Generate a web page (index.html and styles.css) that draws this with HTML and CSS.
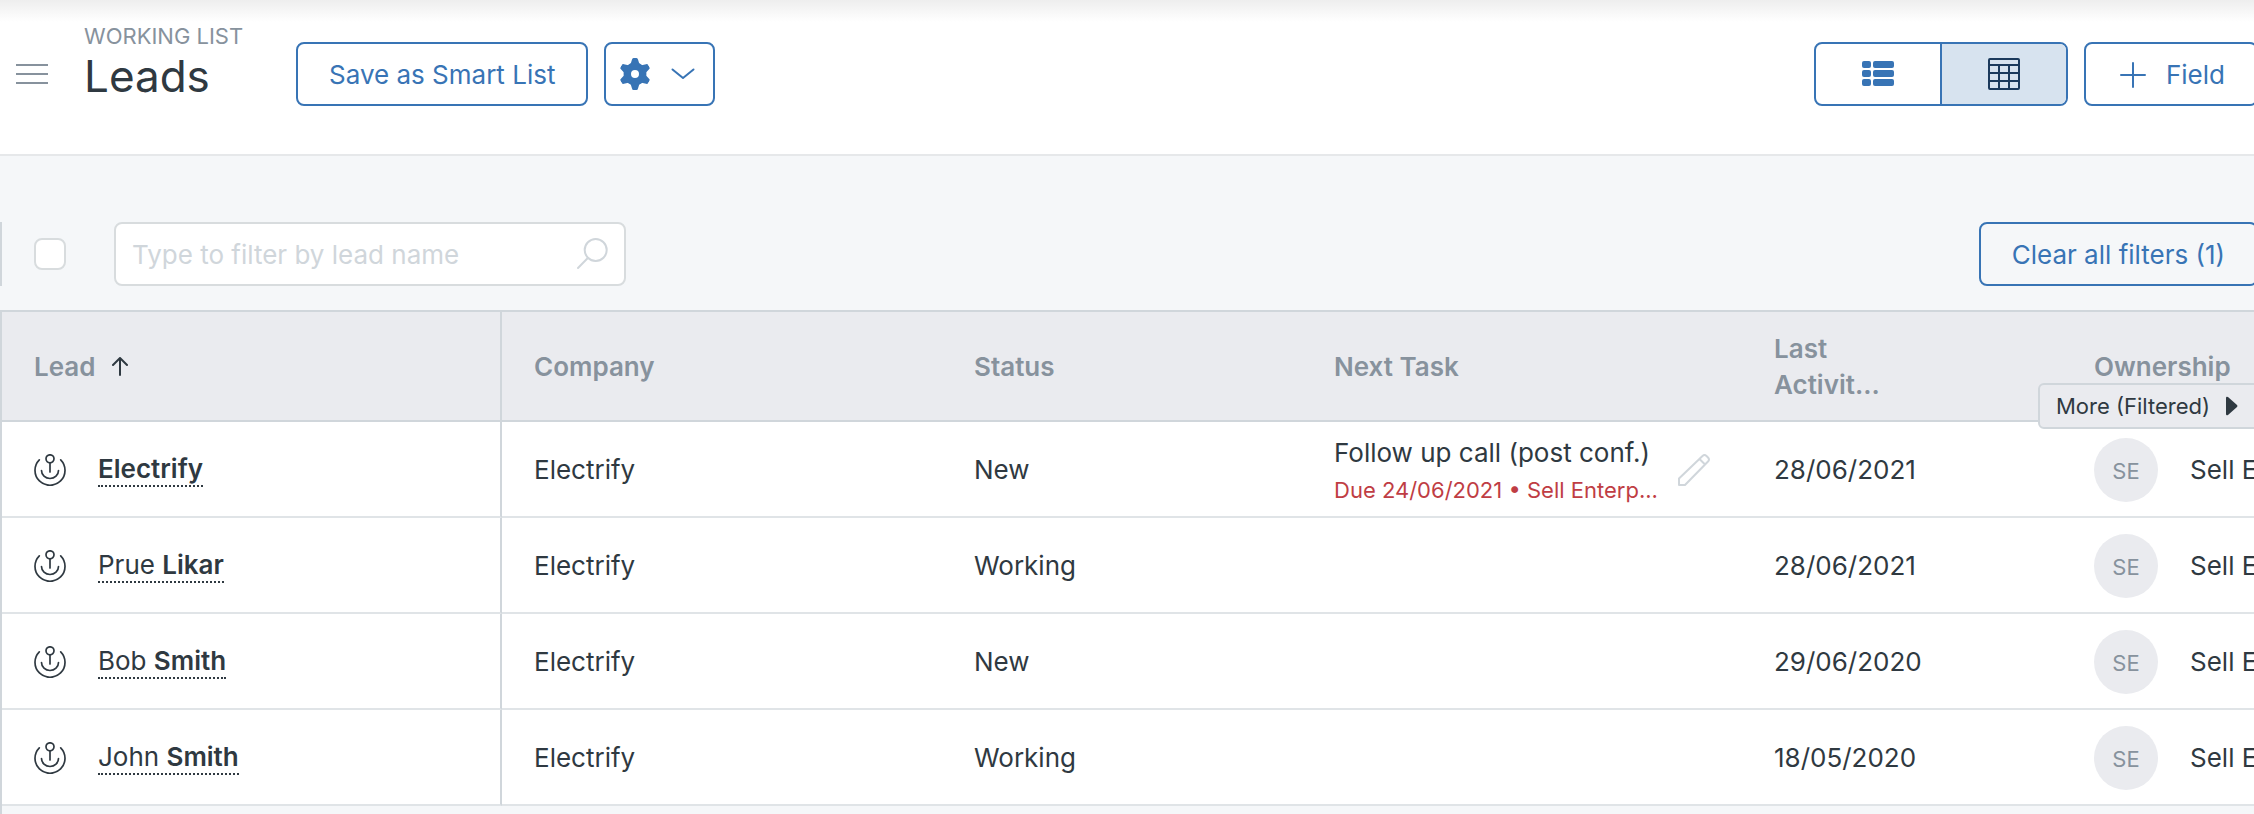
FILE: index.html
```
<!DOCTYPE html>
<html lang="en">
  <head>
    <meta charset="UTF-8">
    <meta name="viewport" content="width=device-width, initial-scale=1.0">
    <title>Leads</title>
    <link rel="stylesheet" href="styles.css">
  </head>
  <body>
    <svg class="sprite" aria-hidden="true">
      <symbol id="anchor" viewBox="0 0 32 32">
        <g fill="none" stroke="currentColor" stroke-width="1.7" stroke-linecap="round">
          <circle cx="16" cy="4.800" r="4"/>
          <path d="M16 9v9M7.500 16.500a8.500 8 0 0 0 17 0M5.300 5.800a15 15 0 1 0 21.400 0"/>
        </g>
      </symbol>
      <symbol id="tooth" viewBox="0 0 32 32">
        <path d="M11 8l2-6.500Q13.300 0 14.500 0h3Q18.700 0 19 1.500L21 8z"/>
      </symbol>
    </svg>

    <header class="header">
      <button class="menu" aria-label="Menu"><span></span><span></span><span></span></button>
      <div class="title">
        <p class="subtitle">WORKING LIST</p>
        <h1>Leads</h1>
      </div>
      <button class="btn">Save as Smart List</button>
      <button class="btn settings" aria-label="Settings">
        <svg width="32" height="32" viewBox="0 0 32 32" fill="currentColor">
          <circle cx="16" cy="16" r="7.700" fill="none" stroke="currentColor" stroke-width="7.400"/>
          <use href="#tooth" width="32" height="32"/>
          <use href="#tooth" width="32" height="32" transform="rotate(60 16 16)"/>
          <use href="#tooth" width="32" height="32" transform="rotate(120 16 16)"/>
          <use href="#tooth" width="32" height="32" transform="rotate(180 16 16)"/>
          <use href="#tooth" width="32" height="32" transform="rotate(240 16 16)"/>
          <use href="#tooth" width="32" height="32" transform="rotate(300 16 16)"/>
        </svg>
        <svg width="24" height="12" viewBox="0 0 24 12">
          <path d="M1.500 1.500 12 10 22.500 1.500" fill="none" stroke="currentColor" stroke-width="2" stroke-linecap="round" stroke-linejoin="round"/>
        </svg>
      </button>
      <div class="views">
        <button class="view" aria-label="List view">
          <svg width="32" height="26" viewBox="0 0 32 26" fill="currentColor">
            <rect width="9" height="7" rx="2"/><rect x="11" width="21" height="7" rx="2"/>
            <rect y="9" width="9" height="7" rx="2"/><rect x="11" y="9" width="21" height="7" rx="2"/>
            <rect y="18" width="9" height="7" rx="2"/><rect x="11" y="18" width="21" height="7" rx="2"/>
          </svg>
        </button>
        <button class="view view-active" aria-label="Table view">
          <svg width="32" height="32" viewBox="0 0 32 32" fill="none" stroke="currentColor" stroke-width="2">
            <rect x="1" y="1" width="30" height="30" rx="1"/>
            <path d="M1 7h30M1 15h30M1 23h30M11 7v24M21 7v24"/>
          </svg>
        </button>
      </div>
      <button class="btn field">
        <svg width="26" height="26" viewBox="0 0 26 26">
          <path d="M13 1v24M1 13h24" stroke="currentColor" stroke-width="2" stroke-linecap="round"/>
        </svg>
        Field
      </button>
    </header>

    <div class="filters">
      <input type="checkbox" class="select-all" aria-label="Select all leads">
      <label class="search">
        <input type="text" placeholder="Type to filter by lead name" aria-label="Filter by lead name">
        <svg width="32" height="32" viewBox="0 0 32 32" fill="none" stroke="currentColor" stroke-width="2" stroke-linecap="round">
          <circle cx="19.700" cy="12" r="11"/>
          <path d="M11.800 20 2 30"/>
        </svg>
      </label>
      <button class="btn clear">Clear all filters (1)</button>
    </div>

    <div class="grid">
      <table>
        <colgroup>
          <col class="col-lead">
          <col class="col-company">
          <col class="col-status">
          <col class="col-task">
          <col class="col-activity">
          <col>
        </colgroup>
        <thead>
          <tr>
            <th>
              <span class="sort">Lead
                <svg width="18" height="20" viewBox="0 0 18 20">
                  <path d="M9 18V1M2 8l7-7 7 7" fill="none" stroke="currentColor" stroke-width="2" stroke-linecap="round" stroke-linejoin="round"/>
                </svg>
              </span>
            </th>
            <th>Company</th>
            <th>Status</th>
            <th>Next Task</th>
            <th>Last<br>Activit...</th>
            <th>
              Ownership
              <button class="more">More (Filtered)
                <svg width="12" height="20" viewBox="0 0 12 20"><path d="M0 2Q0 0 2 1l9 8q1 1 0 2l-9 8q-2 1-2-1z" fill="currentColor"/></svg>
              </button>
            </th>
          </tr>
        </thead>
        <tbody>
          <tr>
            <td><div class="lead"><svg class="anchor"><use href="#anchor"/></svg><a href="#"><b>Electrify</b></a></div></td>
            <td>Electrify</td>
            <td>New</td>
            <td>
              <div class="task">
                <div class="task-text">
                  <p>Follow up call (post conf.)</p>
                  <p class="due">Due 24/06/2021 • Sell Enterp...</p>
                </div>
                <button class="edit" aria-label="Edit task">
                  <svg width="32" height="32" viewBox="0 0 32 32" fill="none" stroke="currentColor" stroke-width="2" stroke-linejoin="round">
                    <path d="M1 31v-6.500L24.500 2q2-2 4 0l1.500 1.500q2 2 0 4L7 31zM21.500 5l5.800 5.800"/>
                  </svg>
                </button>
              </div>
            </td>
            <td>28/06/2021</td>
            <td><div class="owner"><span class="avatar">SE</span>Sell Enterprise</div></td>
          </tr>
          <tr>
            <td><div class="lead"><svg class="anchor"><use href="#anchor"/></svg><a href="#">Prue <b>Likar</b></a></div></td>
            <td>Electrify</td>
            <td>Working</td>
            <td></td>
            <td>28/06/2021</td>
            <td><div class="owner"><span class="avatar">SE</span>Sell Enterprise</div></td>
          </tr>
          <tr>
            <td><div class="lead"><svg class="anchor"><use href="#anchor"/></svg><a href="#">Bob <b>Smith</b></a></div></td>
            <td>Electrify</td>
            <td>New</td>
            <td></td>
            <td>29/06/2020</td>
            <td><div class="owner"><span class="avatar">SE</span>Sell Enterprise</div></td>
          </tr>
          <tr>
            <td><div class="lead"><svg class="anchor"><use href="#anchor"/></svg><a href="#">John <b>Smith</b></a></div></td>
            <td>Electrify</td>
            <td>Working</td>
            <td></td>
            <td>18/05/2020</td>
            <td><div class="owner"><span class="avatar">SE</span>Sell Enterprise</div></td>
          </tr>
        </tbody>
      </table>
    </div>
  </body>
</html>
```
FILE: styles.css
```
* { box-sizing: border-box; }
html { height: 100%; }
body {
  min-height: 100%;
  margin: 0;
  display: flex;
  flex-direction: column;
  overflow: hidden;
  background-color: #f5f7f9;
  color: #2f3941;
  font: 26px/36px Inter, "Liberation Sans", sans-serif;
}
p, h1 { margin: 0; }
svg { display: block; flex: none; }
button, input { font: inherit; }
button { cursor: pointer; }
.sprite {
  position: absolute;
  width: 0;
  height: 0;
}

/* header */
.header {
  display: flex;
  align-items: flex-start;
  margin-right: -4px;
  height: 156px;
  padding: 42px 0 0 16px;
  border-bottom: 2px solid #e6e8ea;
  background: linear-gradient(#eeeeee, #fff 22px);
}
.menu {
  display: flex;
  flex-direction: column;
  gap: 7px;
  width: 32px;
  margin-top: 22px;
  padding: 0;
  border: 0;
  background: none;
}
.menu span {
  height: 2px;
  background-color: #87929d;
}
.title {
  width: 212px;
  margin-top: -20px;
  margin-left: 36px;
}
.subtitle {
  color: #87929d;
  font-size: 22px;
  line-height: 28px;
}
h1 {
  font-size: 44px;
  font-weight: 400;
  line-height: 52px;
}
.btn {
  display: flex;
  align-items: center;
  flex: none;
  height: 64px;
  padding: 2px 31px 0;
  border: 2px solid #3874b5;
  border-radius: 8px;
  background: none;
  color: #3874b5;
  white-space: nowrap;
}
.settings {
  gap: 20px;
  margin-left: 16px;
  padding: 0 18px 0 13px;
}
.views {
  display: flex;
  margin-left: auto;
  border: 2px solid #3874b5;
  border-radius: 8px;
  overflow: hidden;
}
.view {
  display: flex;
  align-items: center;
  justify-content: center;
  width: 124px;
  height: 60px;
  padding: 0;
  border: 0;
  background: none;
  color: #3874b5;
}
.view-active {
  width: 126px;
  border-left: 2px solid #3874b5;
  background-color: #d7e3ef;
  color: #1b3a5c;
}
.field {
  gap: 20px;
  margin-left: 16px;
  padding-left: 34px;
}

/* filters */
.filters {
  display: flex;
  align-items: center;
  height: 64px;
  margin: 66px -4px 24px 0;
  border-left: 2px solid #d0d6db;
}
.select-all {
  appearance: none;
  width: 32px;
  height: 32px;
  margin: 0 48px 0 32px;
  border: 2px solid #d8dcde;
  border-radius: 8px;
  background-color: #fff;
}
.search {
  display: flex;
  align-items: center;
  width: 512px;
  height: 64px;
  padding: 0 16px;
  border: 2px solid #d8dcde;
  border-radius: 8px;
  background-color: #fff;
  color: #d0d6db;
}
.search input {
  flex: 1;
  min-width: 0;
  padding: 2px 0 0;
  border: 0;
  outline: 0;
  background: none;
  color: #2f3941;
}
.search input::placeholder { color: #d0d6db; }
.clear { margin-left: auto; }

/* table */
.grid {
  flex: 1;
  border-top: 2px solid #d0d6db;
  border-left: 2px solid #d0d6db;
}
table {
  width: 100%;
  table-layout: fixed;
  border-spacing: 0;
}
.col-lead { width: 500px; }
.col-company, .col-task { width: 440px; }
.col-status { width: 360px; }
.col-activity { width: 320px; }
th, td {
  padding: 2px 32px 0;
  text-align: left;
  white-space: nowrap;
}
th {
  position: relative;
  height: 110px;
  border-bottom: 2px solid #d0d6db;
  background-color: #eaebef;
  color: #87929d;
  font-weight: 600;
}
td {
  height: 96px;
  border-bottom: 2px solid #e0e4e7;
  background-color: #fff;
}
th:first-child, td:first-child { border-right: 2px solid #d0d6db; }
.sort {
  display: flex;
  align-items: center;
  gap: 16px;
}
.sort svg { color: #2f3941; }
.more {
  position: absolute;
  top: 71px;
  left: -24px;
  display: flex;
  align-items: center;
  gap: 16px;
  width: 240px;
  height: 46px;
  padding: 0 16px;
  border: 2px solid #d0d6db;
  border-radius: 6px;
  background-color: #eaebef;
  color: #2f3941;
  font-size: 22px;
  font-weight: 400;
}
.lead {
  display: flex;
  align-items: center;
  gap: 32px;
}
.anchor {
  width: 32px;
  height: 32px;
}
.lead a {
  border-bottom: 2px dotted #2f3941;
  color: #2f3941;
  line-height: 32px;
  text-decoration: none;
}
.lead b { font-weight: 600; }
.task {
  display: flex;
  align-items: center;
}
.task-text {
  width: 344px;
  padding-top: 4px;
}
.due {
  color: #bf3d44;
  font-size: 22px;
  line-height: 38px;
}
.edit {
  padding: 0;
  border: 0;
  background: none;
  color: #d0d6db;
}
.owner {
  display: flex;
  align-items: center;
  gap: 32px;
}
.avatar {
  flex: none;
  width: 64px;
  height: 64px;
  border-radius: 50%;
  background-color: #eaebef;
  color: #87929d;
  font-size: 22px;
  line-height: 66px;
  text-align: center;
}
```
